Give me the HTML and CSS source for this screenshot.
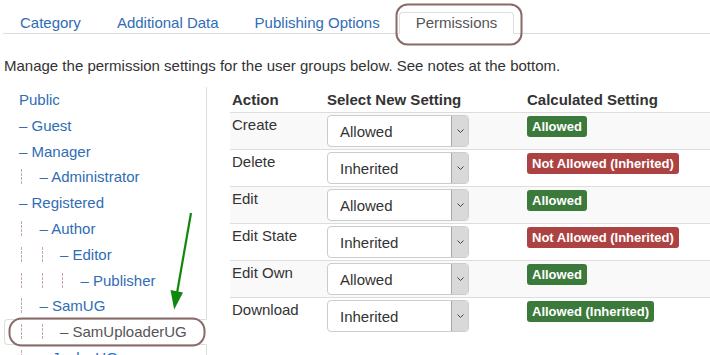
FILE: index.html
```html
<!DOCTYPE html>
<html lang="en">
<head>
    <meta charset="UTF-8">
    <title>Permissions</title>
    <link rel="stylesheet" href="styles.css">
</head>
<body>
    <div class="page">
        <ul class="tabs">
            <li><a href="#">Category</a></li>
            <li><a href="#">Additional Data</a></li>
            <li><a href="#">Publishing Options</a></li>
            <li class="active"><a href="#">Permissions</a></li>
        </ul>

        <p class="intro">Manage the permission settings for the user groups below. See notes at the bottom.</p>

        <div class="perm-layout">
            <ul class="groups">
                <li><a href="#">Public</a></li>
                <li><a href="#">&ndash; Guest</a></li>
                <li><a href="#">&ndash; Manager</a></li>
                <li><a href="#"><span class="pipe"></span>&ndash; Administrator</a></li>
                <li><a href="#">&ndash; Registered</a></li>
                <li><a href="#"><span class="pipe"></span>&ndash; Author</a></li>
                <li><a href="#"><span class="pipe"></span><span class="pipe"></span>&ndash; Editor</a></li>
                <li><a href="#"><span class="pipe"></span><span class="pipe"></span><span class="pipe"></span>&ndash; Publisher</a></li>
                <li><a href="#"><span class="pipe"></span>&ndash; SamUG</a></li>
                <li class="active"><a href="#"><span class="pipe"></span><span class="pipe"></span>&ndash; SamUploaderUG</a></li>
                <li><a href="#"><span class="pipe"></span>&ndash; JoulesUG</a></li>
            </ul>

            <table class="rules">
                <thead>
                    <tr>
                        <th class="col-action">Action</th>
                        <th class="col-select">Select New Setting</th>
                        <th>Calculated Setting</th>
                    </tr>
                </thead>
                <tbody>
                    <tr>
                        <td>Create</td>
                        <td><span class="select"><span class="value">Allowed</span><span class="arrow"><svg width="7" height="4" viewBox="0 0 7 4"><polyline points="0.5,0.5 3.5,3.5 6.5,0.5" fill="none" stroke="#444" stroke-width="1"/></svg></span></span></td>
                        <td><span class="label label-success">Allowed</span></td>
                    </tr>
                    <tr>
                        <td>Delete</td>
                        <td><span class="select"><span class="value">Inherited</span><span class="arrow"><svg width="7" height="4" viewBox="0 0 7 4"><polyline points="0.5,0.5 3.5,3.5 6.5,0.5" fill="none" stroke="#444" stroke-width="1"/></svg></span></span></td>
                        <td><span class="label label-important">Not Allowed (Inherited)</span></td>
                    </tr>
                    <tr>
                        <td>Edit</td>
                        <td><span class="select"><span class="value">Allowed</span><span class="arrow"><svg width="7" height="4" viewBox="0 0 7 4"><polyline points="0.5,0.5 3.5,3.5 6.5,0.5" fill="none" stroke="#444" stroke-width="1"/></svg></span></span></td>
                        <td><span class="label label-success">Allowed</span></td>
                    </tr>
                    <tr>
                        <td>Edit State</td>
                        <td><span class="select"><span class="value">Inherited</span><span class="arrow"><svg width="7" height="4" viewBox="0 0 7 4"><polyline points="0.5,0.5 3.5,3.5 6.5,0.5" fill="none" stroke="#444" stroke-width="1"/></svg></span></span></td>
                        <td><span class="label label-important">Not Allowed (Inherited)</span></td>
                    </tr>
                    <tr>
                        <td>Edit Own</td>
                        <td><span class="select"><span class="value">Allowed</span><span class="arrow"><svg width="7" height="4" viewBox="0 0 7 4"><polyline points="0.5,0.5 3.5,3.5 6.5,0.5" fill="none" stroke="#444" stroke-width="1"/></svg></span></span></td>
                        <td><span class="label label-success">Allowed</span></td>
                    </tr>
                    <tr>
                        <td>Download</td>
                        <td><span class="select"><span class="value">Inherited</span><span class="arrow"><svg width="7" height="4" viewBox="0 0 7 4"><polyline points="0.5,0.5 3.5,3.5 6.5,0.5" fill="none" stroke="#444" stroke-width="1"/></svg></span></span></td>
                        <td><span class="label label-success">Allowed (Inherited)</span></td>
                    </tr>
                </tbody>
            </table>
        </div>

        <!-- screenshot annotations drawn on top -->
        <svg class="marks" width="710" height="355" viewBox="0 0 710 355">
            <rect x="396.5" y="4.5" width="125" height="40" rx="11" fill="none" stroke="#8a6a68" stroke-width="2"/>
            <rect x="9.5" y="318.5" width="195" height="27" rx="12" fill="none" stroke="#8a6a68" stroke-width="2"/>
            <line x1="191" y1="213" x2="176.5" y2="296" stroke="#12870f" stroke-width="2.2"/>
            <polygon points="170.5,290 183,292.5 174.2,309.5" fill="#12870f"/>
        </svg>
    </div>
</body>
</html>
```

FILE: styles.css
```css
/* Base */
* {
    margin: 0;
    padding: 0;
    box-sizing: border-box;
}
body {
    font-family: "Liberation Sans", Arial, sans-serif;
    font-size: 15px;
    line-height: 20px;
    color: #333;
    background: #fff;
    overflow: hidden;
}
a {
    color: #2f6db4;
    text-decoration: none;
}
.page {
    position: relative;
    padding: 12px 0 0 4px;
}

/* Tabs */
.tabs {
    list-style: none;
    display: flex;
    margin-left: -1px;
    border-bottom: 1px solid #ddd;
}
.tabs li {
    margin-right: 2px;
    margin-bottom: -1px;
}
.tabs a {
    display: block;
    padding: 0 16px;
    line-height: 20px;
    border: 1px solid transparent;
    border-radius: 4px 4px 0 0;
}
.tabs .active a {
    color: #555;
    background: #fff;
    border-color: #ddd #ddd transparent;
}

.intro {
    margin: 22px 0 12px;
}

/* Group tree + rules table */
.perm-layout {
    display: grid;
    grid-template-columns: 203px 1fr;
    column-gap: 23px;
    align-items: start;
}
.groups {
    list-style: none;
    border-right: 1px solid #ddd;
    margin-top: -1px;
}
.groups li {
    margin-right: -1px;
}
.groups a {
    display: block;
    height: 25.8px;
    line-height: 23.8px;
    padding-left: 14px;
    border: 1px solid transparent;
    border-radius: 4px 0 0 4px;
    white-space: nowrap;
}
.groups .active a {
    color: #555;
    background: #fff;
    border-color: #ddd;
    border-right-color: #fff;
}
.pipe {
    display: inline-block;
    width: 18.5px;
    height: 15px;
    margin-left: 2px;
    border-left: 1px dashed #c9a5a5;
    vertical-align: -2px;
}

.rules {
    width: 100%;
    border-collapse: collapse;
}
.rules th {
    text-align: left;
    font-weight: bold;
    padding: 2px;
}
.rules th.col-action {
    width: 95px;
}
.rules th.col-select {
    width: 200px;
}
.rules td {
    padding: 2px;
    vertical-align: top;
    border-top: 1px solid #ddd;
}
.rules tbody tr:nth-child(odd) td {
    background: #f9f9f9;
}

/* Fake select */
.select {
    display: flex;
    width: 142px;
    height: 32px;
    border: 1px solid #ccc;
    border-radius: 4px;
    background: #fff;
}
.select .value {
    flex: 1;
    padding-left: 12px;
    line-height: 31px;
    color: #333;
}
.select .arrow {
    width: 17px;
    display: flex;
    align-items: center;
    justify-content: center;
    background: #d9d9d9;
    border-left: 1px solid #a8a8a8;
    border-radius: 0 3px 3px 0;
}

/* Labels */
.label {
    display: inline-block;
    padding: 0 5px;
    line-height: 21px;
    font-size: 13px;
    font-weight: bold;
    color: #fff;
    border-radius: 3px;
    margin-top: 1px;
}
.label-success {
    background: #3c7a3c;
}
.label-important {
    background: #ad4242;
}

/* Annotations */
.marks {
    position: absolute;
    left: 0;
    top: 0;
    pointer-events: none;
}
```
